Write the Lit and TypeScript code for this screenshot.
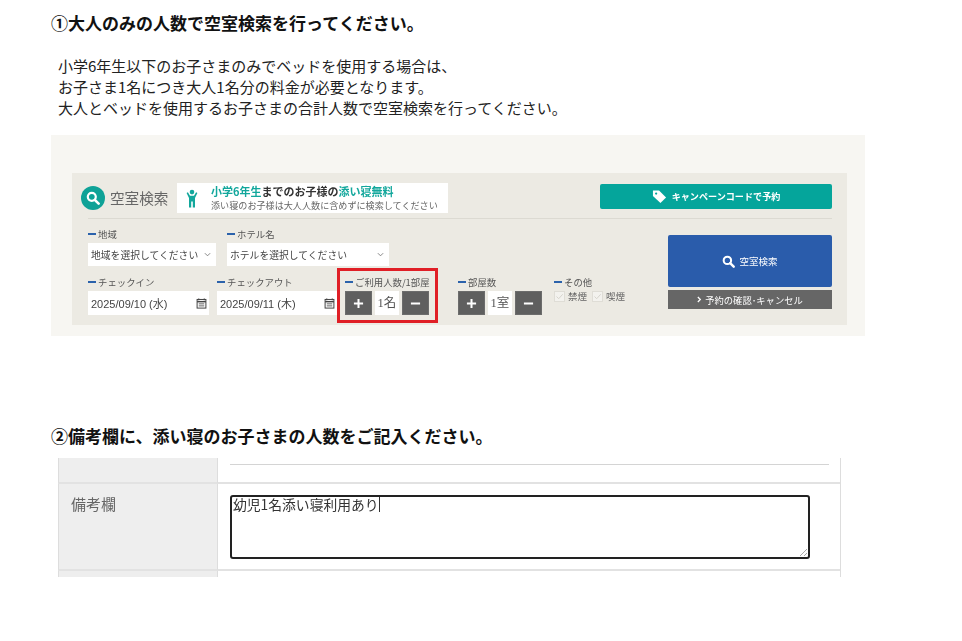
import { LitElement, html, css, svg } from "lit";
import { customElement } from "lit/decorators.js";

const calendar = html`<svg class="cal" viewBox="0 0 12 12" width="11" height="11"><path d="M3 .5v2M9 .5v2" stroke="#444" stroke-width="1.2"/><rect x="1.2" y="1.6" width="9.6" height="9.4" fill="none" stroke="#444" stroke-width="1.1"/><path d="M1.2 4h9.6" stroke="#444" stroke-width="1.6"/><path d="M3 6.4h6M3 8.6h6" stroke="#555" stroke-width="1"/></svg>`;
const chevron = html`<svg class="chev" viewBox="0 0 8 5" width="7" height="5"><path d="M1 1l3 3 3-3" fill="none" stroke="#777" stroke-width="1"/></svg>`;
const check = html`<svg class="chk" viewBox="0 0 11 11" width="11" height="11"><rect x=".5" y=".5" width="10" height="10" fill="#f3f2ee" stroke="#dfddd6"/><path d="M2.5 5.5l2.2 2.2 4-4.4" fill="none" stroke="#d6d4cd" stroke-width="1"/></svg>`;
const magnifier = (c: string, s: number) => svg`<svg viewBox="0 0 14 14" width=${s} height=${s}><circle cx="5.8" cy="5.8" r="4" fill="none" stroke=${c} stroke-width="2.2"/><path d="M8.8 8.8l3.8 3.8" stroke=${c} stroke-width="2.6" stroke-linecap="round"/></svg>`;

@customElement("app-root")
export class AppRoot extends LitElement {
  static styles = css`
    :host {
      display: block;
      width: 962px;
      height: 641px;
      overflow: hidden;
      background: #fff;
      font-family: "Noto Sans CJK JP", "Noto Sans", sans-serif;
      color: #222;
      padding: 11px 0 0 51px;
      box-sizing: border-box;
    }
    * { box-sizing: border-box; }
    h2 { margin: 0; font-size: 17px; line-height: 24px; font-weight: 700; color: #111; }
    .intro { margin: 20px 0 17px 7px; font-size: 15px; line-height: 21px; color: #222; }
    .shot { width: 814px; height: 201px; background: #f7f6f2; padding: 38px 18px 11px 21px; filter: blur(0.35px); margin-bottom: 88px; }
    .inner { height: 152px; background: #eceae3; padding: 10px 15px 0 9px; font-family: "Noto Sans CJK JP", sans-serif; color: #555; }
    .head { display: flex; align-items: center; height: 30px; margin-bottom: 5px; }
    .logo { width: 24px; height: 24px; border-radius: 50%; background: #0fa297; display: flex; align-items: center; justify-content: center; flex: none; }
    .title { font-size: 14.6px; line-height: 30px; color: #666; margin-left: 5px; width: 67px; white-space: nowrap; }
    .banner { width: 271px; height: 30px; background: #fff; display: flex; align-items: center; padding-left: 9px; }
    .banner svg { flex: none; }
    .btxt { margin: -2px 0 0 13px; white-space: nowrap; }
    .b1 { font-size: 11px; line-height: 14px; font-weight: 700; color: #333; }
    .b1 span { color: #12a79c; }
    .b2 { font-size: 9.1px; line-height: 12px; color: #666; margin-top: 1px; }
    .camp { margin-left: auto; width: 232px; height: 25px; border-radius: 2px; background: #05a59b; color: #fff; font-size: 9.1px; font-weight: 700; display: flex; align-items: center; justify-content: center; gap: 5px; margin-top: -4px; }
    .rule { height: 1px; background: #dcdad2; margin-left: 7px; }
    .body { display: flex; margin-left: 7px; }
    .left { flex: 1; padding-top: 10px; }
    .row { display: flex; }
    .row + .row { margin-top: 11px; }
    .lab { display: flex; align-items: center; gap: 2px; font-size: 9.4px; line-height: 10px; height: 12px; padding-bottom: 2px; color: #555; margin-bottom: 2px; white-space: nowrap; }
    .lab::before { content: ""; width: 8px; height: 2px; background: #2b62ab; flex: none; }
    .sel { background: #fff; height: 23px; display: flex; align-items: center; font-size: 9.8px; color: #444; padding: 0 3px; justify-content: space-between; white-space: nowrap; }
    .sel .chev { margin-right: 2px; }
    .f1 { width: 128px; margin-right: 11px; }
    .f2 { width: 162px; }
    .date { background: #fff; height: 24px; display: flex; align-items: center; justify-content: space-between; font-family: "Liberation Sans", "Noto Sans CJK JP", sans-serif; font-size: 11px; color: #444; padding: 0 2px 0 3px; white-space: nowrap; }
    .d1 { width: 121px; margin-right: 8px; }
    .d2 { width: 120px; }
    .redbox { width: 101px; height: 55px; margin: -9px 20px -8px 0; border: 3px solid #e01f26; padding: 6px 0 0 5px; }
    .stepper { display: flex; gap: 3px; }
    .st { width: 27px; height: 24px; background: #5f5f5f; border: 1px solid #6c6c6c; display: flex; align-items: center; justify-content: center; }
    .val { width: 24px; height: 24px; background: #fff; font-size: 12.5px; line-height: 24px; text-align: center; color: #555; font-family: "Liberation Serif", "Noto Sans CJK JP", serif; white-space: nowrap; }
    .rooms { width: 96px; }
    .other { width: 80px; }
    .checks { display: flex; align-items: center; font-size: 9.5px; line-height: 11px; color: #666; }
    .chk { margin-right: 3px; flex: none; }
    .checks span { margin-right: 5px; white-space: nowrap; }
    .right { width: 164px; flex: none; padding-top: 16px; }
    .go { height: 52px; background: #2a5cab; border-radius: 2px; display: flex; align-items: center; justify-content: center; gap: 4px; font-size: 9.5px; color: #fff; }
    .cancel { margin-top: 3px; height: 19px; background: #666; color: #fff; font-size: 9.3px; display: flex; align-items: center; justify-content: center; gap: 3px; }
    .gap { height: 10px; }
    .table { width: 783px; height: 119px; display: grid; grid-template-columns: 160px 1fr; grid-template-rows: 26px 87px 6px; border-right: 1px solid #ddd; margin-left: 7px; filter: blur(0.3px); }
    .th { background: #eee; border-left: 1px solid #ddd; border-right: 1px solid #ddd; }
    .td { background: #fff; }
    .bb { border-bottom: 2px solid #e2e2e2; }
    .top { padding: 6px 11px 0 12px; }
    .top div { height: 1px; background: #d4d4d4; }
    .th.note { font-size: 15px; line-height: 22px; color: #666; padding: 9px 0 0 12px; }
    .td.note { padding: 11px 0 0 12px; }
    .ta { position: relative; width: 580px; height: 64px; border: 2px solid #222; border-radius: 3px; font-size: 13.8px; line-height: 15px; color: #333; padding: 0 0 0 1px; white-space: nowrap; }
    .caret { display: inline-block; width: 1px; height: 15px; background: #333; vertical-align: -2px; }
    .grip { position: absolute; right: 0; bottom: 0; }
  `;

  private plus() {
    return html`<svg viewBox="0 0 12 12" width="11" height="11"><path d="M6 1v10M1 6h10" stroke="#fff" stroke-width="2.2"/></svg>`;
  }
  private minus() {
    return html`<svg viewBox="0 0 12 12" width="11" height="11"><path d="M1 6h10" stroke="#fff" stroke-width="2.2"/></svg>`;
  }
  private stepper(v: string) {
    return html`<div class="stepper"><div class="st">${this.plus()}</div><div class="val">${v}</div><div class="st">${this.minus()}</div></div>`;
  }

  render() {
    return html`
      <h2>①大人のみの人数で空室検索を行ってください。</h2>
      <div class="intro">小学6年生以下のお子さまのみでベッドを使用する場合は、<br />お子さま1名につき大人1名分の料金が必要となります。<br />大人とベッドを使用するお子さまの合計人数で空室検索を行ってください。</div>
      <div class="shot">
        <div class="inner">
          <div class="head">
            <div class="logo">${magnifier("#fff", 14)}</div>
            <div class="title">空室検索</div>
            <div class="banner">
              <svg viewBox="0 0 12 18" width="12" height="19"><circle cx="6" cy="2.6" r="2.3" fill="#12a79c"/><path d="M.6 3.6l1.3-.8L4 6.2h4l2.1-3.4 1.3.8L9 8.6V18H6.8v-6h-1.6v6H3V8.6z" fill="#12a79c"/></svg>
              <div class="btxt">
                <div class="b1"><span>小学6年生</span>までのお子様の<span>添い寝無料</span></div>
                <div class="b2">添い寝のお子様は大人人数に含めずに検索してください</div>
              </div>
            </div>
            <div class="camp">
              <svg viewBox="0 0 16 16" width="15" height="15"><path d="M1 1.5h6.5L15 9l-6 6-8-7.5z" fill="#fff"/><circle cx="4.4" cy="4.8" r="1.2" fill="#05a59b"/></svg>
              <span>キャンペーンコードで予約</span>
            </div>
          </div>
          <div class="rule"></div>
          <div class="body">
            <div class="left">
              <div class="row">
                <div class="f1"><div class="lab">地域</div><div class="sel"><span>地域を選択してください</span>${chevron}</div></div>
                <div class="f2"><div class="lab">ホテル名</div><div class="sel"><span>ホテルを選択してください</span>${chevron}</div></div>
              </div>
              <div class="row">
                <div class="d1"><div class="lab">チェックイン</div><div class="date"><span>2025/09/10 (水)</span>${calendar}</div></div>
                <div class="d2"><div class="lab">チェックアウト</div><div class="date"><span>2025/09/11 (木)</span>${calendar}</div></div>
                <div class="redbox"><div class="lab">ご利用人数/1部屋</div>${this.stepper("1名")}</div>
                <div class="rooms"><div class="lab">部屋数</div>${this.stepper("1室")}</div>
                <div class="other"><div class="lab">その他</div><div class="checks">${check}<span>禁煙</span>${check}<span>喫煙</span></div></div>
              </div>
            </div>
            <div class="right">
              <div class="go">${magnifier("#fff", 13)}<span>空室検索</span></div>
              <div class="cancel"><svg viewBox="0 0 6 8" width="5" height="7"><path d="M1 1l3 3-3 3" fill="none" stroke="#fff" stroke-width="1.5"/></svg><span>予約の確認･キャンセル</span></div>
            </div>
          </div>
        </div>
      </div>
      <h2>②備考欄に、添い寝のお子さまの人数をご記入ください。</h2>
      <div class="gap"></div>
      <div class="table">
        <div class="th bb"></div>
        <div class="td bb top"><div></div></div>
        <div class="th note bb">備考欄</div>
        <div class="td note bb">
          <div class="ta">幼児1名添い寝利用あり<span class="caret"></span>
            <svg class="grip" viewBox="0 0 9 9" width="9" height="9"><path d="M1 8l7-7M5 8l3-3" stroke="#aaa" stroke-width="1"/></svg>
          </div>
        </div>
        <div class="th"></div>
        <div class="td"></div>
      </div>
    `;
  }
}
